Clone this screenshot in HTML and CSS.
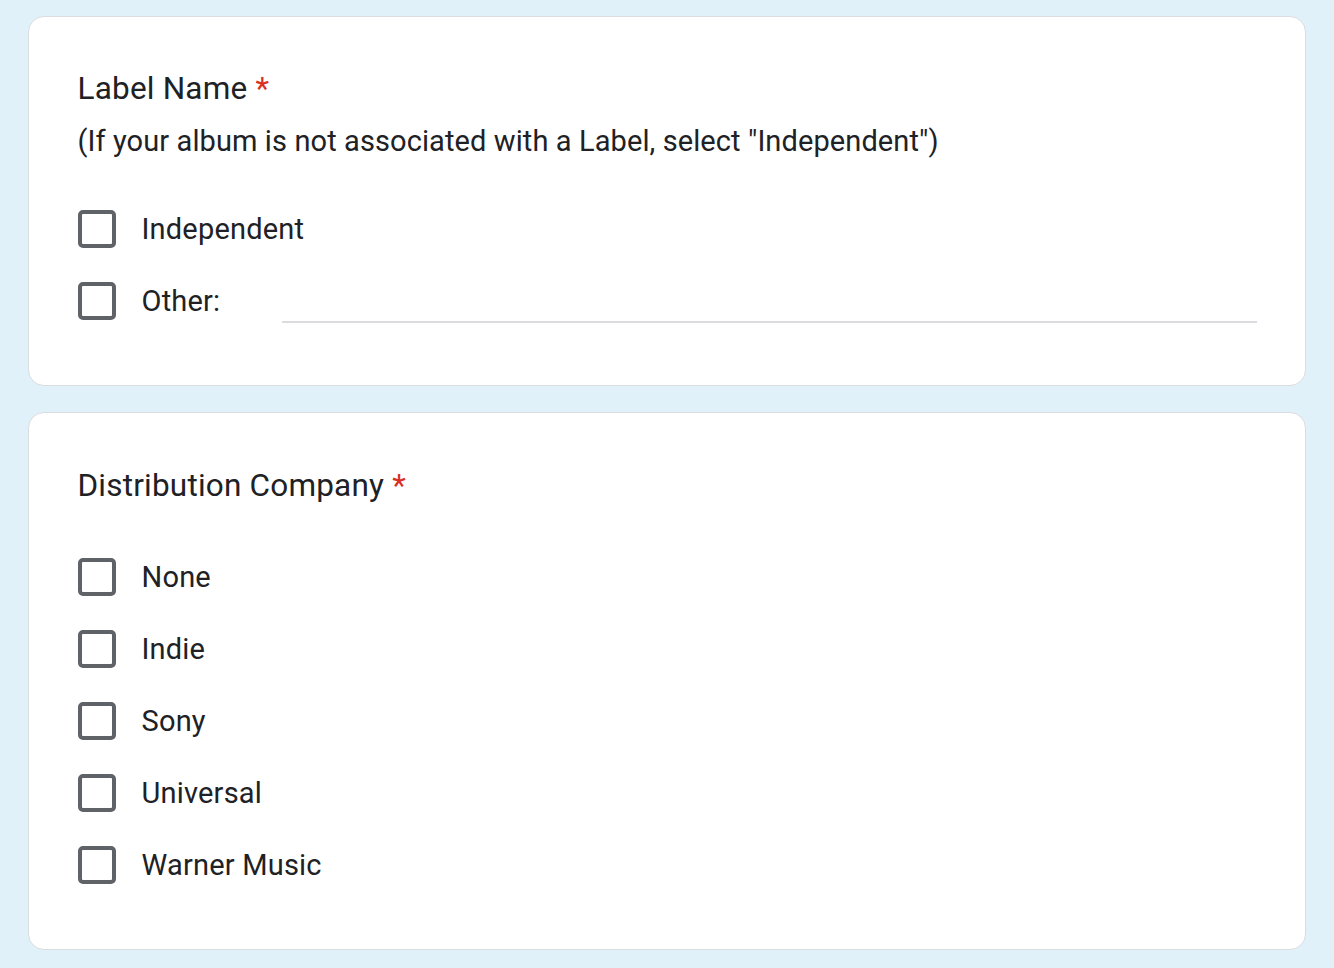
FILE: index.html
```html
<!DOCTYPE html>
<html>
<head>
<meta charset="utf-8">
<link rel="stylesheet" href="styles.css">
</head>
<body>
<main class="page">
  <section class="card card-label">
    <div class="title">Label Name <span class="req">*</span></div>
    <div class="desc">(If your album is not associated with a Label, select "Independent")</div>
    <ul class="options options-after-desc">
      <li class="option"><span class="box"></span><span class="text">Independent</span></li>
      <li class="option"><span class="box"></span><span class="text">Other:</span><span class="field"></span></li>
    </ul>
  </section>
  <section class="card card-dist">
    <div class="title">Distribution Company <span class="req">*</span></div>
    <ul class="options options-after-title">
      <li class="option"><span class="box"></span><span class="text">None</span></li>
      <li class="option"><span class="box"></span><span class="text">Indie</span></li>
      <li class="option"><span class="box"></span><span class="text">Sony</span></li>
      <li class="option"><span class="box"></span><span class="text">Universal</span></li>
      <li class="option"><span class="box"></span><span class="text">Warner Music</span></li>
    </ul>
  </section>
</main>
</body>
</html>
```
FILE: styles.css
```css
html, body {
  margin: 0;
  padding: 0;
  background: #e1f1fa;
}
body {
  font-family: Roboto, "Liberation Sans", Arial, sans-serif;
  color: #202124;
}
.page {
  display: flex;
  flex-direction: column;
  gap: 26px;
  padding: 16px 28px 19px 28px;
}
.card {
  background: #fff;
  border: 1.5px solid #dadce0;
  border-radius: 16px;
  padding: 52px 48px 48px 48.5px;
}
.card-dist {
  padding-top: 53px;
  padding-bottom: 48px;
}
.title {
  font-size: 31.5px;
  line-height: 40px;
  letter-spacing: 0.2px;
}
.req {
  color: #d93025;
}
.desc {
  margin-top: 12px;
  font-size: 29px;
  line-height: 40px;
  letter-spacing: 0.1px;
}
.options {
  list-style: none;
  margin: 0;
  padding: 0;
}
.options-after-desc { margin-top: 32px; }
.options-after-title { margin-top: 35px; }
.option {
  display: flex;
  align-items: center;
  height: 72px;
}
.box {
  box-sizing: border-box;
  width: 38px;
  height: 38px;
  border: 4px solid #5f6368;
  border-radius: 5px;
  flex: none;
}
.text {
  margin-left: 26px;
  font-size: 29px;
  letter-spacing: 0.2px;
}
.field {
  flex: 1;
  align-self: stretch;
  margin-left: 62px;
  margin-bottom: 14px;
  border-bottom: 2px solid #dadce0;
}
```
